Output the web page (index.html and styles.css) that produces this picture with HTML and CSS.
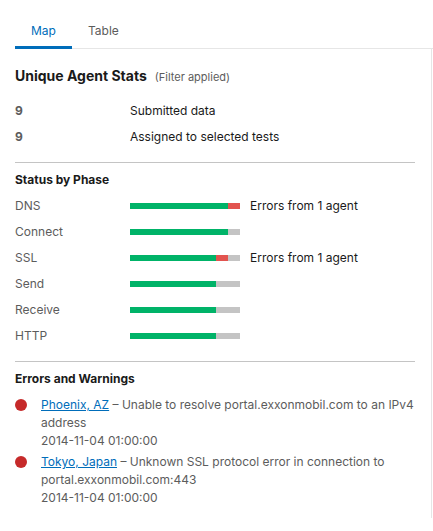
FILE: index.html
```html
<!DOCTYPE html>
<html lang="en">
<head>
<meta charset="utf-8">
<title>Unique Agent Stats</title>
<link rel="stylesheet" href="styles.css">
</head>
<body>
<nav class="tabs" role="tablist">
  <button class="tab tab-active" type="button" role="tab" aria-selected="true">Map</button>
  <button class="tab" type="button" role="tab" aria-selected="false">Table</button>
</nav>
<main class="panel">
  <header class="panel-header">
    <h1 class="title">Unique Agent Stats</h1>
    <span class="note">(Filter applied)</span>
  </header>
  <table class="grid">
    <tr><th class="label count" scope="row">9</th><td>Submitted data</td></tr>
    <tr><th class="label count" scope="row">9</th><td>Assigned to selected tests</td></tr>
  </table>
  <section class="section">
    <h2 class="subtitle">Status by Phase</h2>
    <table class="grid">
      <tr><th class="label" scope="row">DNS</th><td class="meter"><div class="bar"><span class="ok" style="flex-grow:8"></span><span class="error" style="flex-grow:1"></span></div></td><td>Errors from 1 agent</td></tr>
      <tr><th class="label" scope="row">Connect</th><td class="meter"><div class="bar"><span class="ok" style="flex-grow:8"></span><span class="none" style="flex-grow:1"></span></div></td><td></td></tr>
      <tr><th class="label" scope="row">SSL</th><td class="meter"><div class="bar"><span class="ok" style="flex-grow:7"></span><span class="error" style="flex-grow:1"></span><span class="none" style="flex-grow:1"></span></div></td><td>Errors from 1 agent</td></tr>
      <tr><th class="label" scope="row">Send</th><td class="meter"><div class="bar"><span class="ok" style="flex-grow:7"></span><span class="none" style="flex-grow:2"></span></div></td><td></td></tr>
      <tr><th class="label" scope="row">Receive</th><td class="meter"><div class="bar"><span class="ok" style="flex-grow:7"></span><span class="none" style="flex-grow:2"></span></div></td><td></td></tr>
      <tr><th class="label" scope="row">HTTP</th><td class="meter"><div class="bar"><span class="ok" style="flex-grow:7"></span><span class="none" style="flex-grow:2"></span></div></td><td></td></tr>
    </table>
  </section>
  <section class="section">
    <h2 class="subtitle">Errors and Warnings</h2>
    <ul class="events">
      <li class="event">
        <span class="dot"></span>
        <div><a class="link" href="#phoenix">Phoenix, AZ</a> – Unable to resolve portal.exxonmobil.com to an IPv4 address<br><time datetime="2014-11-04T01:00:00">2014-11-04 01:00:00</time></div>
      </li>
      <li class="event">
        <span class="dot"></span>
        <div><a class="link" href="#tokyo">Tokyo, Japan</a> – Unknown SSL protocol error in connection to portal.exxonmobil.com:443<br><time datetime="2014-11-04T01:00:00">2014-11-04 01:00:00</time></div>
      </li>
    </ul>
  </section>
</main>
</body>
</html>
```

FILE: styles.css
```css
* { box-sizing: border-box; }

body {
  margin: 0;
  background: #fff;
  color: #1a1a1a;
  font: 12px/18px Inter, "Liberation Sans", sans-serif;
}

.tabs {
  display: flex;
  margin-left: 15px;
  padding-top: 16px;
  border-bottom: 1px solid #e6e6e6;
}

.tab {
  height: 33px;
  margin-bottom: -1px;
  padding: 0 16px;
  border: 0;
  border-bottom: 3px solid transparent;
  background: none;
  color: #5c5c5c;
  font: inherit;
}

.tab-active {
  border-color: #006dba;
  color: #006dba;
}

.panel {
  margin-right: 1px;
  padding: 16px 16px 11px 15px;
  border-right: 1px solid #e6e6e6;
}

.panel-header {
  display: flex;
  align-items: baseline;
  gap: 8px;
  margin-bottom: 12px;
}

.title {
  margin: 0;
  font-size: 14px;
  line-height: 21px;
}

.note {
  color: #5c5c5c;
  font-size: 11px;
}

.grid {
  width: 100%;
  border-collapse: collapse;
}

.grid th,
.grid td {
  height: 26px;
  padding: 0;
  text-align: left;
}

.grid .label {
  width: 115px;
  color: #5c5c5c;
  font-weight: 400;
}

.grid .count { font-weight: 700; }

.grid .meter {
  width: 120px;
  padding-right: 10px;
}

.bar {
  display: flex;
  height: 6px;
}

.ok { background: #00b368; }
.error { background: #e2544f; }
.none { background: #c4c4c4; }

.section {
  margin-top: 12px;
  padding-top: 8px;
  border-top: 1px solid #c4c4c4;
}

.subtitle {
  margin: 0 0 4px;
  font-size: 12px;
  line-height: 18px;
}

.events {
  display: grid;
  gap: 3px;
  margin: 0;
  padding: 4px 0 0;
  list-style: none;
}

.event {
  display: flex;
  gap: 14px;
  color: #5c5c5c;
}

.dot {
  flex: none;
  width: 12px;
  height: 12px;
  margin-top: 3px;
  border-radius: 50%;
  background: #c62a2a;
}

.link { color: #006dba; }
```
